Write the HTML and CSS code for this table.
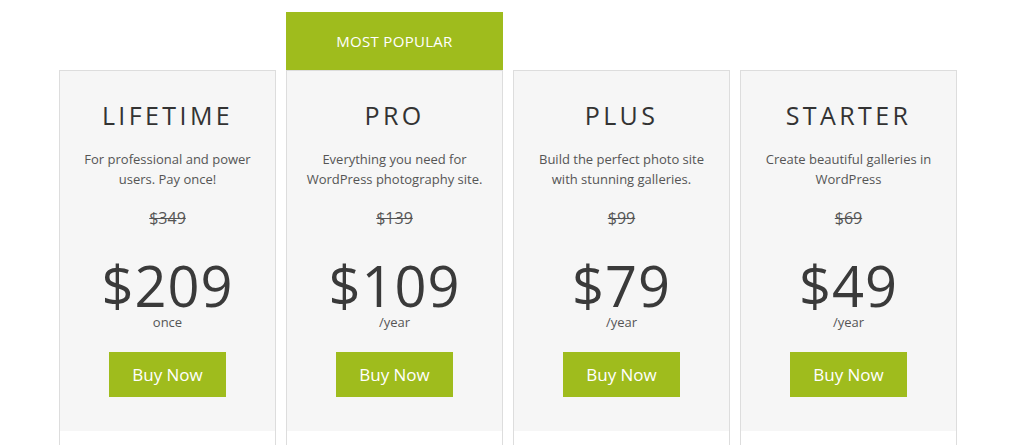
FILE: index.html
```html
<!DOCTYPE html>
<html lang="en">
<head>
    <meta charset="UTF-8">
    <meta name="viewport" content="width=device-width, initial-scale=1.0">
    <title>Pricing</title>
    <link rel="stylesheet" href="styles.css">
</head>
<body>

    <!-- ===== PRICING TABLE ===== -->
    <div class="pricing">

        <div class="plan">
            <div class="plan-box">
                <div class="plan-head">
                    <h2 class="plan-name">LIFETIME</h2>
                    <p class="plan-desc">For professional and power users. Pay once!</p>
                    <div class="plan-old">$349</div>
                    <div class="plan-price">$209</div>
                    <div class="plan-period">once</div>
                    <a href="#" class="buy-button">Buy Now</a>
                </div>
                <div class="plan-foot"></div>
            </div>
        </div>

        <div class="plan plan-popular">
            <div class="popular-badge">MOST POPULAR</div>
            <div class="plan-box">
                <div class="plan-head">
                    <h2 class="plan-name">PRO</h2>
                    <p class="plan-desc">Everything you need for WordPress photography site.</p>
                    <div class="plan-old">$139</div>
                    <div class="plan-price">$109</div>
                    <div class="plan-period">/year</div>
                    <a href="#" class="buy-button">Buy Now</a>
                </div>
                <div class="plan-foot"></div>
            </div>
        </div>

        <div class="plan">
            <div class="plan-box">
                <div class="plan-head">
                    <h2 class="plan-name">PLUS</h2>
                    <p class="plan-desc">Build the perfect photo site with stunning galleries.</p>
                    <div class="plan-old">$99</div>
                    <div class="plan-price">$79</div>
                    <div class="plan-period">/year</div>
                    <a href="#" class="buy-button">Buy Now</a>
                </div>
                <div class="plan-foot"></div>
            </div>
        </div>

        <div class="plan">
            <div class="plan-box">
                <div class="plan-head">
                    <h2 class="plan-name">STARTER</h2>
                    <p class="plan-desc">Create beautiful galleries in WordPress</p>
                    <div class="plan-old">$69</div>
                    <div class="plan-price">$49</div>
                    <div class="plan-period">/year</div>
                    <a href="#" class="buy-button">Buy Now</a>
                </div>
                <div class="plan-foot"></div>
            </div>
        </div>

    </div>

</body>
</html>
```

FILE: styles.css
```css
/* General Reset and Base */
* { box-sizing: border-box; margin: 0; padding: 0; }
html, body {
    width: 100%; height: 100%; overflow: hidden;
    font-family: "Open Sans", "Noto Sans", Arial, sans-serif;
    background-color: #FFFFFF; color: #555555;
}

/* --- Pricing row --- */
.pricing {
    display: flex; align-items: flex-start; gap: 10px;
    padding: 12px 0 0 59px;
}
.plan { width: 217px; display: flex; flex-direction: column; }
.plan .plan-box { margin-top: 58px; }
.plan-popular .plan-box { margin-top: 0; }

.popular-badge {
    height: 58px; background-color: #9FBC1D; color: #FFFFFF;
    display: flex; align-items: center; justify-content: center;
    font-size: 15px; letter-spacing: 0.3px;
}

.plan-box { border: 1px solid #DDDDDD; border-bottom: none; background: #FFFFFF; }

.plan-head {
    background-color: #F6F6F6;
    display: flex; flex-direction: column; align-items: center;
    text-align: center;
    padding: 28px 10px 34px;
    height: 360px;
}
.plan-name {
    font-size: 25px; font-weight: 400; color: #333333;
    letter-spacing: 3.4px; line-height: 32px;
}
.plan-desc {
    margin-top: 19px; max-width: 182px;
    font-size: 13px; line-height: 19.5px; color: #555555;
}
.plan-old {
    margin-top: 18px;
    font-size: 16px; color: #555555;
    text-decoration: line-through;
}
.plan-price {
    margin-top: 28px;
    font-size: 56px; line-height: 56px; color: #3A3A3A;
    letter-spacing: 1px;
}
.plan-period { font-size: 13px; line-height: 18px; color: #555555; }

.buy-button {
    margin-top: 21px;
    display: flex; align-items: center; justify-content: center;
    width: 117px; height: 46px;
    background-color: #9FBC1D; color: #FFFFFF;
    font-size: 17px; text-decoration: none;
}

.plan-foot { height: 60px; background: #FFFFFF; }
```
